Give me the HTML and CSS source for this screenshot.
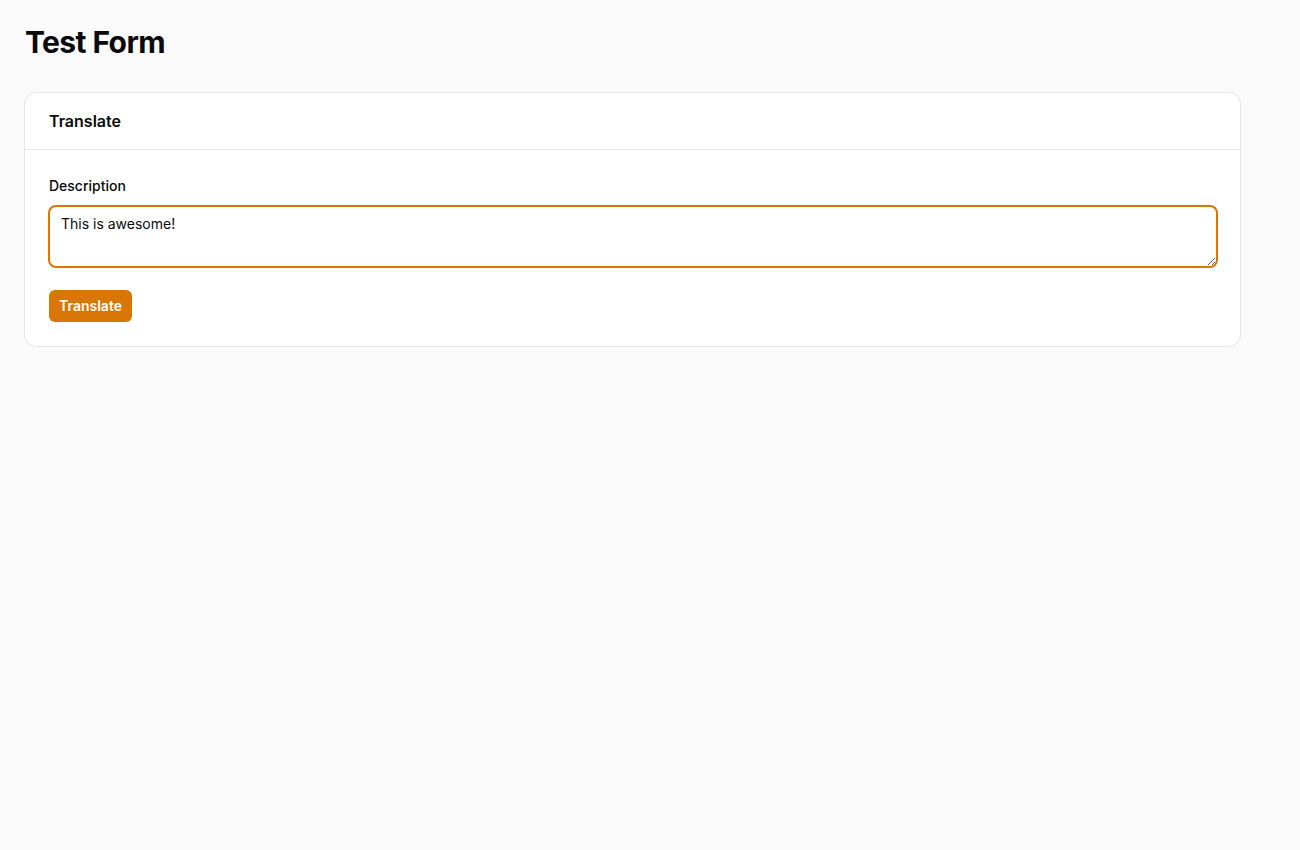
FILE: index.html
```html
<!DOCTYPE html>
<html lang="en">
<head>
<meta charset="utf-8">
<title>Test Form</title>
<link rel="stylesheet" href="styles.css">
</head>
<body>
<main class="page">
  <h1 class="title">Test Form</h1>
  <section class="card">
    <header class="card-header">Translate</header>
    <div class="card-body">
      <label class="label" for="desc">Description</label>
      <textarea id="desc" class="textarea" rows="2">This is awesome!</textarea>
      <button class="btn" type="button">Translate</button>
    </div>
  </section>
</main>
<script src="script.js"></script>
</body>
</html>
```

FILE: styles.css
```css
* { box-sizing: border-box; }
html, body { margin: 0; padding: 0; }
body {
  background: #fafafa;
  font-family: Inter, "Noto Sans", sans-serif;
  color: #0a0a0a;
}
.page {
  padding: 24px 24px 24px 25px;
}
.title {
  margin: 0 0 32px;
  font-size: 30px;
  line-height: 36px;
  font-weight: 700;
  letter-spacing: -0.6px;
}
.card {
  width: 1217px;
  margin-left: -1px;
  background: #fff;
  border: 1px solid #e5e5e5;
  border-radius: 12px;
}
.card-header {
  padding: 16px 24px;
  font-size: 16px;
  line-height: 24px;
  font-weight: 600;
  border-bottom: 1px solid #e5e5e5;
}
.card-body {
  padding: 24px;
  display: flex;
  flex-direction: column;
  align-items: flex-start;
}
.label {
  font-size: 14px;
  line-height: 20px;
  font-weight: 500;
  margin-top: 2px;
  margin-bottom: 9px;
}
.textarea {
  height: 63px;
  margin-left: -1px;
  width: calc(100% + 3px);
  border: 2px solid #d97706;
  border-radius: 8px;
  padding: 7px 11px;
  font-family: Inter, "Noto Sans", sans-serif;
  font-size: 14px;
  line-height: 20px;
  color: #0a0a0a;
  caret-color: #0a0a0a;
  outline: none;
  resize: vertical;
  background: #fff;
}
.btn {
  margin-top: 22px;
  height: 32px;
  padding: 0 10px;
  border: none;
  border-radius: 6px;
  background: #d97706;
  color: #fff;
  font-family: Inter, "Noto Sans", sans-serif;
  font-size: 14px;
  font-weight: 600;
  line-height: 20px;
  cursor: pointer;
}
```

FILE: script.js
```js
var t = document.getElementById('desc');
t.focus();
t.setSelectionRange(t.value.length, t.value.length);
```
